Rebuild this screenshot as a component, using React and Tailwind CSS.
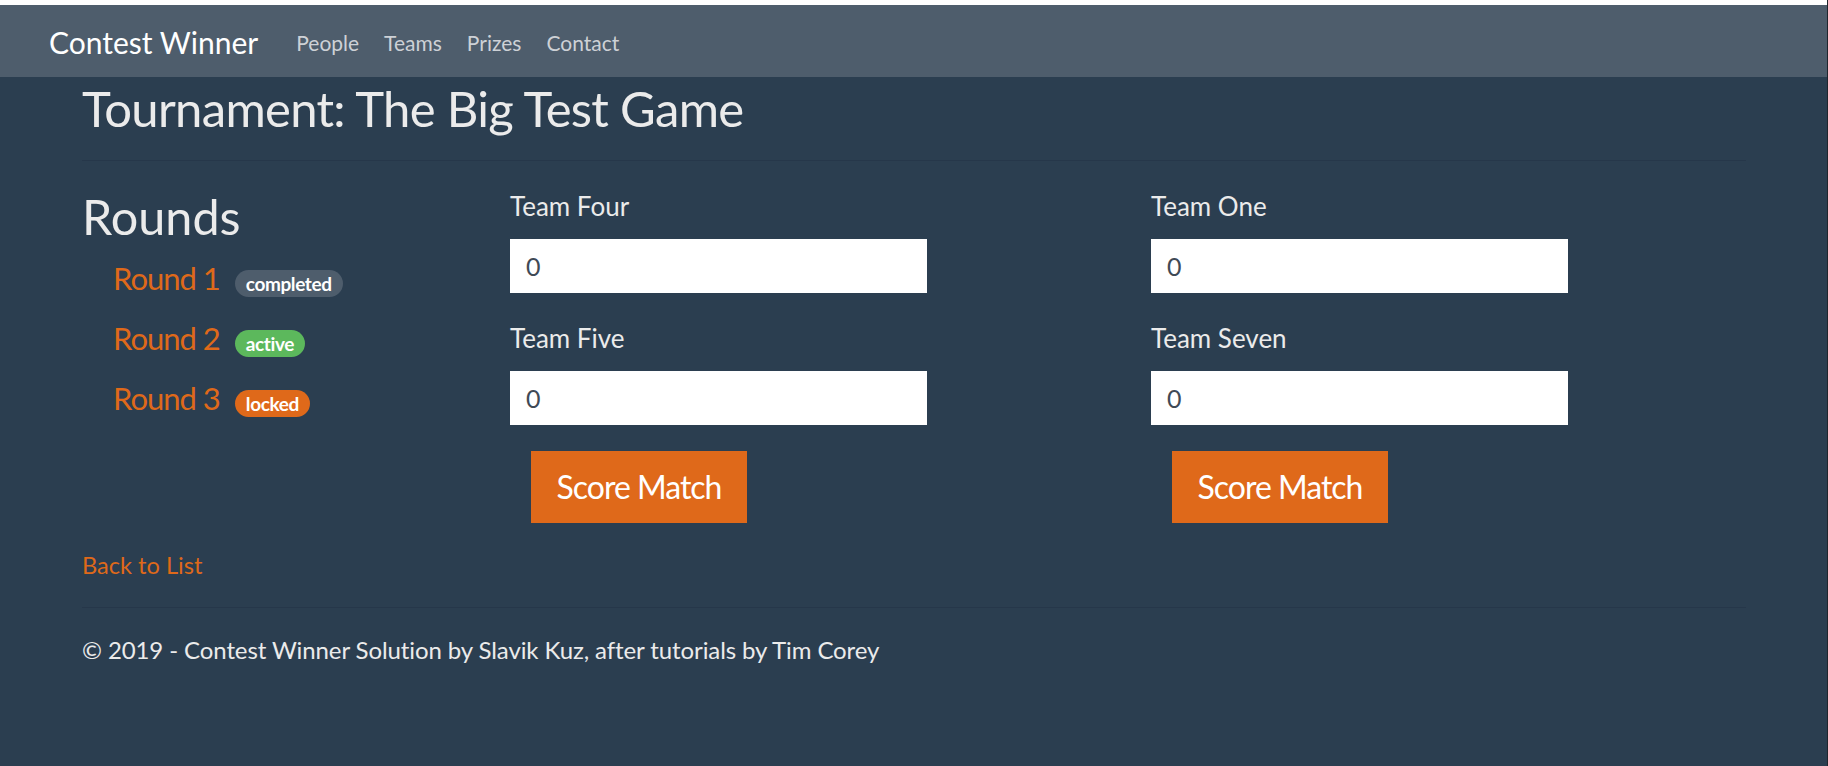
import React from 'react';

const rounds = [
  { name: 'Round 1', status: 'completed', badge: 'bg-[#4e5d6c]' },
  { name: 'Round 2', status: 'active', badge: 'bg-[#5cb85c]' },
  { name: 'Round 3', status: 'locked', badge: 'bg-[#df691a]' },
];

const matchups = [
  { teams: ['Team Four', 'Team Five'] },
  { teams: ['Team One', 'Team Seven'] },
];

// single matchup form: two team labels with score inputs and a submit button
const MatchupForm = ({ teams, className }) => (
  <div className={`flex flex-col pt-[30px] ${className}`}>
    {teams.map((team, i) => (
      <div key={team} className={i > 0 ? 'mt-[30px]' : ''}>
        <label className="block text-[26px] leading-[31px] text-[#ebebeb]">{team}</label>
        <input
          type="text"
          defaultValue="0"
          className="mt-[17px] block w-[417px] h-[54px] bg-white pl-[16px] text-[25px] text-[#3f4a56] outline-none"
        />
      </div>
    ))}
    <button className="mt-[26px] ml-[21px] w-[216px] h-[72px] bg-[#df691a] text-white text-[32px] tracking-[-1px] leading-none">
      Score Match
    </button>
  </div>
);

export default function App() {
  return (
    <div className="min-h-screen flex bg-[#2b3e50] font-[Lato,sans-serif] text-[#ebebeb]">
      <div className="flex-1">
        <div className="h-[5px] bg-white" />

        {/* Navbar */}
        <nav className="h-[72px] bg-[#4e5d6c] flex items-center pl-[49px]">
          <a href="#" className="pt-[2px] text-[30px] leading-[1.2] text-white">Contest Winner</a>
          <div className="flex items-center gap-[25px] ml-[38px] pt-[3px] text-[21px] leading-[1.2] text-[#cdd1d6]">
            <a href="#">People</a>
            <a href="#">Teams</a>
            <a href="#">Prizes</a>
            <a href="#">Contact</a>
          </div>
        </nav>

        <main className="pl-[82px] pr-[81px]">
          <h1 className="mt-[2px] text-[49px] tracking-[-0.7px] leading-[59px]">Tournament: The Big Test Game</h1>
          <div className="mt-[22px] h-px bg-[#26374a]" />

          <div className="flex">
            {/* Rounds list */}
            <div className="w-[428px] pt-[28px]">
              <h2 className="text-[48.5px] leading-[54px]">Rounds</h2>
              <ul className="mt-[6px] pl-[31px]">
                {rounds.map((r) => (
                  <li key={r.name} className="h-[60px] flex items-center gap-[15px]">
                    <a href="#" className="text-[31px] tracking-[-1px] leading-[1.2] text-[#df691a]">{r.name}</a>
                    <span className={`mt-[8px] h-[27px] flex items-center rounded-full px-[11px] text-[19px] tracking-[-0.4px] font-bold leading-none text-white ${r.badge}`}>
                      {r.status}
                    </span>
                  </li>
                ))}
              </ul>
            </div>

            <MatchupForm teams={matchups[0].teams} className="w-[641px]" />
            <MatchupForm teams={matchups[1].teams} className="flex-1" />
          </div>

          <a href="#" className="block mt-[28px] text-[23.6px] leading-[1.2] text-[#df691a]">Back to List</a>
          <div className="mt-[28px] h-px bg-[#26374a]" />

          <footer className="mt-[28px] text-[24px] tracking-[-0.1px] leading-[1.2]">
            © 2019 - Contest Winner Solution by Slavik Kuz, after tutorials by Tim Corey
          </footer>
        </main>
      </div>
      {/* window edge */}
      <div className="w-px bg-[#1f262d]" />
    </div>
  );
}
